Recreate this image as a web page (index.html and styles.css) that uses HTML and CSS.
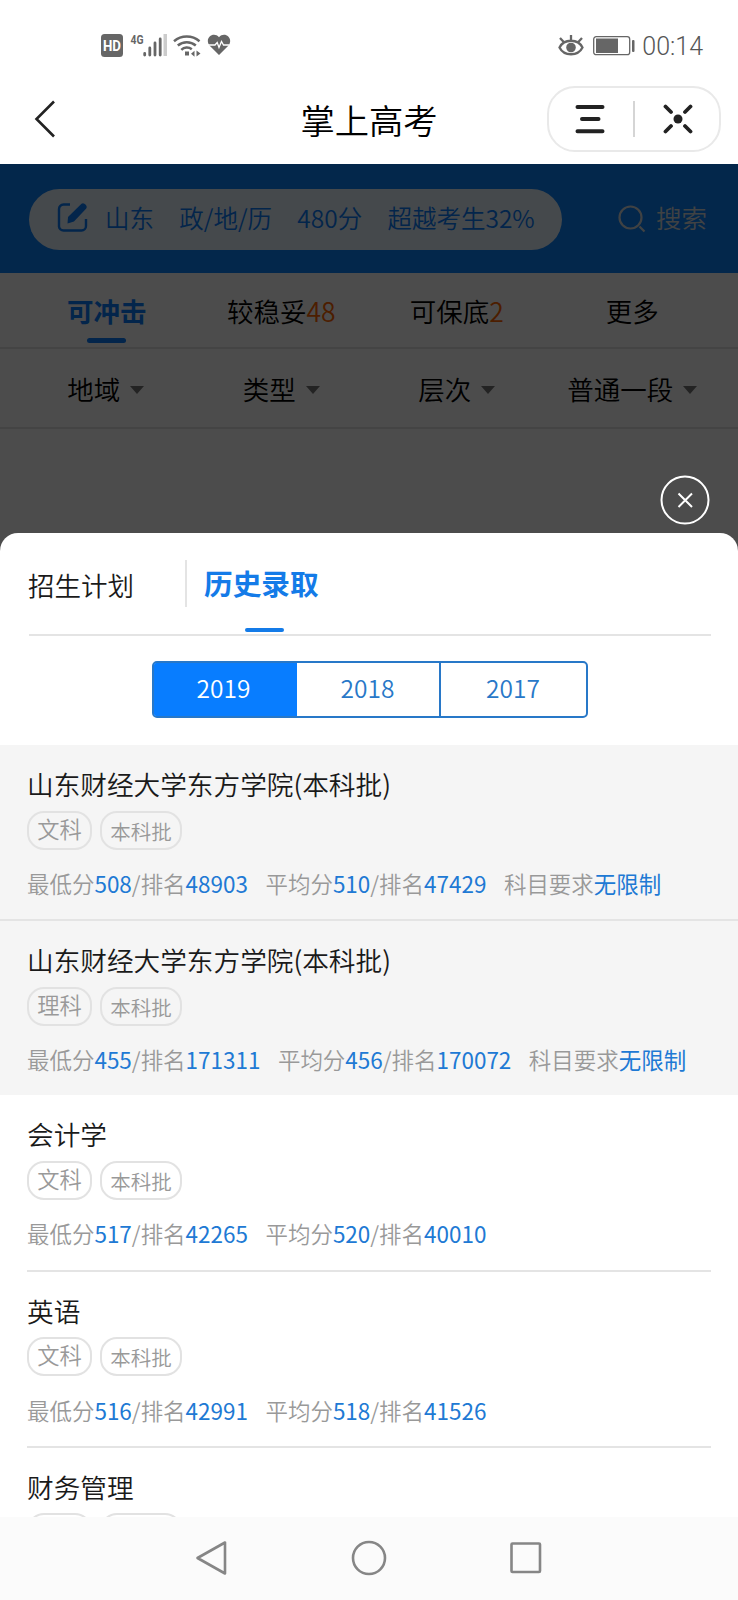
FILE: index.html
```html
<!DOCTYPE html>
<html lang="zh-CN">
<head>
    <meta charset="UTF-8">
    <meta name="viewport" content="width=device-width, initial-scale=1.0">
    <title>掌上高考</title>
    <link rel="stylesheet" href="styles.css">
</head>
<body>
    <div class="status">
        <div class="status-left">
            <svg class="icon-hd" width="22" height="23" viewBox="0 0 22 23">
                <rect width="22" height="23" rx="3.5" fill="#666"/>
                <text x="11" y="17" text-anchor="middle" textLength="18" lengthAdjust="spacingAndGlyphs">HD</text>
            </svg>
            <svg class="icon-signal" width="38" height="24" viewBox="0 0 38 24">
                <text x="0.5" y="10.5" textLength="13" lengthAdjust="spacingAndGlyphs">4G</text>
                <path d="M14.7 22v-1.500M19.800 22v-7M25 22v-12M30.200 22V6" stroke="#666" stroke-width="2.800" stroke-linecap="round"/>
                <rect x="33.500" y="1" width="3.500" height="22" fill="#ccc"/>
            </svg>
            <svg class="icon-wifi" width="28" height="24" viewBox="0 0 28 24" fill="none" stroke="#666" stroke-width="2.500">
                <path d="M1 8.200a20 20 0 0 1 25.500 0M4.800 12.500a14 14 0 0 1 18 0M8.300 16.800a8 8 0 0 1 10.500-.5"/>
                <path d="M12 18.500h4v4h-4zM18 20.800l3.500-3v6zM23.500 17.500l4 3-4 3z" fill="#666" stroke="none"/>
            </svg>
            <svg class="icon-heart" width="24" height="22" viewBox="0 0 24 22">
                <path d="M12 21L2.500 11.500C-3 4 6.500-3 12 3.200 17.500-3 27 4 21.500 11.500z" fill="#666"/>
                <path d="M1 11h7l2.200-2.500 1.800 5 2.500-6 2 3.500h6" fill="none" stroke="#fff" stroke-width="1.300"/>
            </svg>
        </div>
        <div class="status-right">
            <svg width="26" height="24" viewBox="0 0 26 24" fill="none" stroke="#666" stroke-width="2.300">
                <path d="M1.500 14.500C6 5.500 20 5.500 24.500 14.500 20 23.500 6 23.500 1.500 14.500zM13 7V2M5.500 8.800L2 5M20.500 8.800L24 5"/>
                <circle cx="13" cy="14.500" r="4.800" fill="#666" stroke="none"/>
            </svg>
            <svg class="icon-battery" width="42" height="20" viewBox="0 0 42 20">
                <rect x=".7" y=".7" width="36" height="18" rx="2.500" fill="none" stroke="#666" stroke-width="1.300"/>
                <rect x="3" y="2.500" width="22" height="14.500" fill="#666"/>
                <rect x="39" y="4" width="2.500" height="12" rx="1" fill="#666"/>
            </svg>
            <span class="time">00:14</span>
        </div>
    </div>

    <div class="navbar">
        <svg class="back" width="22" height="40" viewBox="0 0 22 40">
            <path d="M20 2.500L2.500 20 20 37.500" fill="none" stroke="#222" stroke-width="2.600"/>
        </svg>
        <h1>掌上高考</h1>
        <div class="capsule">
            <svg width="30" height="30" viewBox="0 0 30 30" stroke="#222" stroke-width="4" stroke-linecap="round">
                <path d="M2.500 3h25M7 15h16.500M2.500 27.300h25"/>
            </svg>
            <i class="capsule-line"></i>
            <svg width="30" height="30" viewBox="0 0 30 30" stroke="#222" stroke-width="3.800" stroke-linecap="round">
                <path d="M2.500 2.500l5.500 5.500M27.500 2.500L22 8M2.500 27.500L8 22M27.500 27.500L22 22"/>
                <circle cx="15" cy="15" r="4.500" fill="#222" stroke="none"/>
            </svg>
        </div>
    </div>

    <div class="content">
        <div class="search-bar">
            <div class="profile">
                <svg width="31" height="31" viewBox="0 0 31 31" fill="none">
                    <path d="M13 2.500H6.500a4.500 4.500 0 0 0-4.500 4.500v17.500A4.500 4.500 0 0 0 6.500 28.500h18a4.500 4.500 0 0 0 4.500-4.500v-7" stroke="#0a7dfa" stroke-width="2.400"/>
                    <path d="M10.500 21.500l.5-6.500L24.500 1.800q2-1.300 4.500 1.200 1.500 2 .2 3.600L17 19.500z" fill="#0a7dfa"/>
                </svg>
                <span>山东</span><span>政/地/历</span><span>480分</span><span>超越考生32%</span>
            </div>
            <div class="search">
                <svg width="28" height="28" viewBox="0 0 28 28" fill="none" stroke="#d8dde2" stroke-width="2.200">
                    <circle cx="12.500" cy="12.500" r="11"/>
                    <path d="M21.500 21.500l5 5"/>
                </svg>
                <span>搜索</span>
            </div>
        </div>
        <div class="row tabs">
            <div class="active">可冲击</div>
            <div>较稳妥<em>48</em></div>
            <div>可保底<em>2</em></div>
            <div>更多</div>
        </div>
        <div class="row filters">
            <div>地域<i class="caret"></i></div>
            <div>类型<i class="caret"></i></div>
            <div>层次<i class="caret"></i></div>
            <div>普通一段<i class="caret"></i></div>
        </div>

        <div class="mask"></div>
        <div class="popup">
            <svg class="close" width="50" height="50" viewBox="0 0 50 50" fill="none" stroke="#fff" stroke-width="2">
                <circle cx="25" cy="25" r="23.500"/>
                <path d="M18.500 18.500l13.500 13.500M32 18.500L18.500 32"/>
            </svg>
            <div class="sheet">
                <div class="sheet-tabs">
                    <div class="plan">招生计划</div>
                    <div class="history">历史录取</div>
                </div>
                <div class="years">
                    <div class="active">2019</div>
                    <div>2018</div>
                    <div>2017</div>
                </div>
                <div class="group school">
                    <div class="item">
                        <h2>山东财经大学东方学院(本科批)</h2>
                        <div class="tags"><span>文科</span><span class="batch">本科批</span></div>
                        <p><span>最低分<b>508</b>/排名<b>48903</b></span><span>平均分<b>510</b>/排名<b>47429</b></span><span>科目要求<b>无限制</b></span></p>
                    </div>
                    <div class="item">
                        <h2>山东财经大学东方学院(本科批)</h2>
                        <div class="tags"><span>理科</span><span class="batch">本科批</span></div>
                        <p><span>最低分<b>455</b>/排名<b>171311</b></span><span>平均分<b>456</b>/排名<b>170072</b></span><span>科目要求<b>无限制</b></span></p>
                    </div>
                </div>
                <div class="group major">
                    <div class="item">
                        <h2>会计学</h2>
                        <div class="tags"><span>文科</span><span class="batch">本科批</span></div>
                        <p><span>最低分<b>517</b>/排名<b>42265</b></span><span>平均分<b>520</b>/排名<b>40010</b></span></p>
                    </div>
                    <div class="item">
                        <h2>英语</h2>
                        <div class="tags"><span>文科</span><span class="batch">本科批</span></div>
                        <p><span>最低分<b>516</b>/排名<b>42991</b></span><span>平均分<b>518</b>/排名<b>41526</b></span></p>
                    </div>
                    <div class="item">
                        <h2>财务管理</h2>
                        <div class="tags"><span></span><span class="batch"></span></div>
                    </div>
                </div>
            </div>
        </div>
    </div>

    <div class="system-nav">
        <svg width="34" height="36" viewBox="0 0 34 36"><path d="M30 2.500v31L2.500 18z"/></svg>
        <svg width="36" height="36" viewBox="0 0 36 36"><circle cx="18" cy="18" r="16"/></svg>
        <svg width="34" height="36" viewBox="0 0 34 36"><rect x="2.500" y="3.500" width="28.500" height="28.500" rx="1"/></svg>
    </div>
</body>
</html>
```

FILE: styles.css
```css
* {
    box-sizing: border-box;
}
body {
    margin: 0;
    width: 738px;
    height: 1600px;
    overflow: hidden;
    display: flex;
    flex-direction: column;
    font-family: "Noto Sans CJK SC", sans-serif;
    font-weight: 350;
    background: #fff;
    color: #1a1a1a;
}
svg {
    display: block;
    flex: none;
}
h1, h2, p {
    margin: 0;
    font-weight: inherit;
}

/* status bar */
.status {
    height: 80px;
    padding: 33px 35px 0 101px;
    display: flex;
    justify-content: space-between;
    align-items: flex-start;
}
.status-left, .status-right {
    display: flex;
    align-items: center;
    height: 24px;
}
.icon-hd text {
    font: bold 15px Roboto, sans-serif;
    fill: #fff;
}
.icon-signal {
    margin-left: 7px;
}
.icon-signal text {
    font: bold 12px Roboto, sans-serif;
    fill: #666;
}
.icon-wifi {
    margin-left: 5px;
}
.icon-heart {
    margin-left: 6px;
}
.icon-battery {
    margin: 1px 7px 0 9px;
}
.time {
    font: 300 25px/24px Roboto, sans-serif;
    color: #555;
    padding-top: 4px;
}

/* title bar */
.navbar {
    height: 84px;
    padding: 6px 17px 0 34px;
    display: grid;
    grid-template-columns: 174px 1fr 174px;
    align-items: start;
}
.back {
    margin-top: 13px;
}
.navbar h1 {
    font-size: 34.300px;
    line-height: 66px;
    text-align: center;
    color: #000;
    padding-right: 17px;
}
.capsule {
    height: 66px;
    border: 2px solid #e9e9e9;
    border-radius: 28px;
    display: flex;
    align-items: center;
    justify-content: space-between;
    padding: 0 26px;
}
.capsule-line {
    width: 2px;
    height: 36px;
    background: #d5d5d5;
}

/* page under the mask */
.content {
    position: relative;
    flex: 1;
    min-height: 0;
    overflow: hidden;
}
.search-bar {
    height: 109px;
    padding: 1px 31px 0 29px;
    background: #0a82fa;
    display: flex;
    align-items: center;
    justify-content: space-between;
}
.profile {
    width: 533px;
    height: 61px;
    padding-left: 28px;
    border-radius: 31px;
    background: #e8f4ff;
    color: #0a7dfa;
    font-size: 24.500px;
    line-height: 58px;
    display: flex;
    align-items: center;
    white-space: nowrap;
}
.profile span {
    margin-right: 25.300px;
    padding-bottom: 2px;
}
.profile svg {
    margin: 0 17px 3px 0;
}
.search {
    display: flex;
    align-items: center;
    gap: 10px;
    font-size: 25.500px;
    line-height: 58px;
    color: #d8dde2;
}
.search span {
    padding-bottom: 4px;
}
.row {
    padding: 0 18px;
    display: grid;
    grid-template-columns: repeat(4, 1fr);
    justify-items: center;
    border-bottom: 2px solid #e4e4e4;
    font-size: 26.500px;
    color: #000;
}
.tabs {
    height: 76px;
    line-height: 76px;
}
.tabs em {
    font-style: normal;
    color: #ff6600;
}
.tabs .active {
    padding-left: 2px;
    font-weight: bold;
    color: #0a7dfa;
    display: flex;
    flex-direction: column;
    align-items: center;
}
.tabs .active::after {
    content: "";
    width: 39px;
    height: 5px;
    margin-top: -11px;
    border-radius: 3px;
    background: #0a7dfa;
}
.filters {
    height: 80px;
    line-height: 80px;
}
.caret {
    display: inline-block;
    margin-left: 10px;
    vertical-align: 6px;
    border: 7.500px solid transparent;
    border-top: 8px solid #777;
    border-bottom: 0;
}

/* admission history popup */
.mask {
    position: absolute;
    inset: 0;
    background: rgba(0, 0, 0, 0.7);
}
.popup {
    position: absolute;
    left: 0;
    right: 0;
    bottom: 0;
    height: 1042px;
}
.close {
    margin: 0 28px 8px auto;
}
.sheet {
    height: 984px;
    overflow: hidden;
    background: #fff;
    border-radius: 18px 18px 0 0;
}
.sheet-tabs {
    height: 103px;
    margin: 0 27px 0 29px;
    padding-top: 27px;
    border-bottom: 2px solid #e4e4e4;
    display: flex;
}
.plan {
    width: 158px;
    height: 47px;
    border-right: 2px solid #e4e4e4;
    font-size: 26.500px;
    line-height: 49px;
    text-indent: -1px;
}
.history {
    margin-left: 17px;
    font-size: 28.700px;
    font-weight: bold;
    line-height: 46px;
    color: #147be8;
    display: flex;
    flex-direction: column;
    align-items: center;
}
.history::after {
    content: "";
    width: 39px;
    height: 4px;
    margin: 22px 0 0 7px;
    border-radius: 2px;
    background: #147be8;
}
.years {
    width: 436px;
    height: 57px;
    margin: 25px auto 27px 152px;
    border: 2px solid #2878c8;
    border-radius: 5px;
    display: grid;
    grid-template-columns: 143px 142px 1fr;
    overflow: hidden;
    font-size: 24.500px;
    line-height: 50px;
    text-align: center;
    color: #2878c8;
}
.years div {
    padding-right: 1px;
}
.years div + div + div {
    border-left: 2px solid #2878c8;
}
.years .active {
    padding-right: 4px;
    background: #087dff;
    color: #fff;
    box-shadow: 0 0 0 2px #087dff;
    clip-path: inset(-2px 0 -2px -2px);
}
.school {
    background: #f5f5f5;
}
.item {
    height: 176.300px;
    padding: 19px 27px 0;
    border-bottom: 2px solid #e4e4e4;
}
.school .item:last-child {
    height: 174px;
    border-bottom: 0;
}
.major .item {
    margin: 0 27px;
    padding: 19px 0 0;
}
.item h2 {
    font-size: 26.650px;
    line-height: 39px;
}
.tags {
    margin-top: 7.500px;
    display: flex;
    gap: 8px;
}
.tags span {
    width: 65px;
    height: 39px;
    border: 2px solid #e2e2e2;
    border-radius: 17px;
    text-align: center;
    font-size: 22.300px;
    line-height: 31px;
    color: #999;
}
.tags .batch {
    width: 82px;
    font-size: 20.500px;
    line-height: 37px;
}
.item p {
    margin-top: 16.500px;
    display: flex;
    gap: 17.500px;
    font-size: 22.470px;
    line-height: 34px;
    white-space: nowrap;
    color: #999;
}
.item b {
    font-weight: 400;
    color: #2079d4;
}

/* android navigation */
.system-nav {
    height: 83px;
    padding: 23px 195px 0;
    background: #fbfbfb;
    display: flex;
    justify-content: space-between;
}
.system-nav svg {
    fill: none;
    stroke: #868686;
    stroke-width: 2.600;
    stroke-linejoin: round;
}
```
